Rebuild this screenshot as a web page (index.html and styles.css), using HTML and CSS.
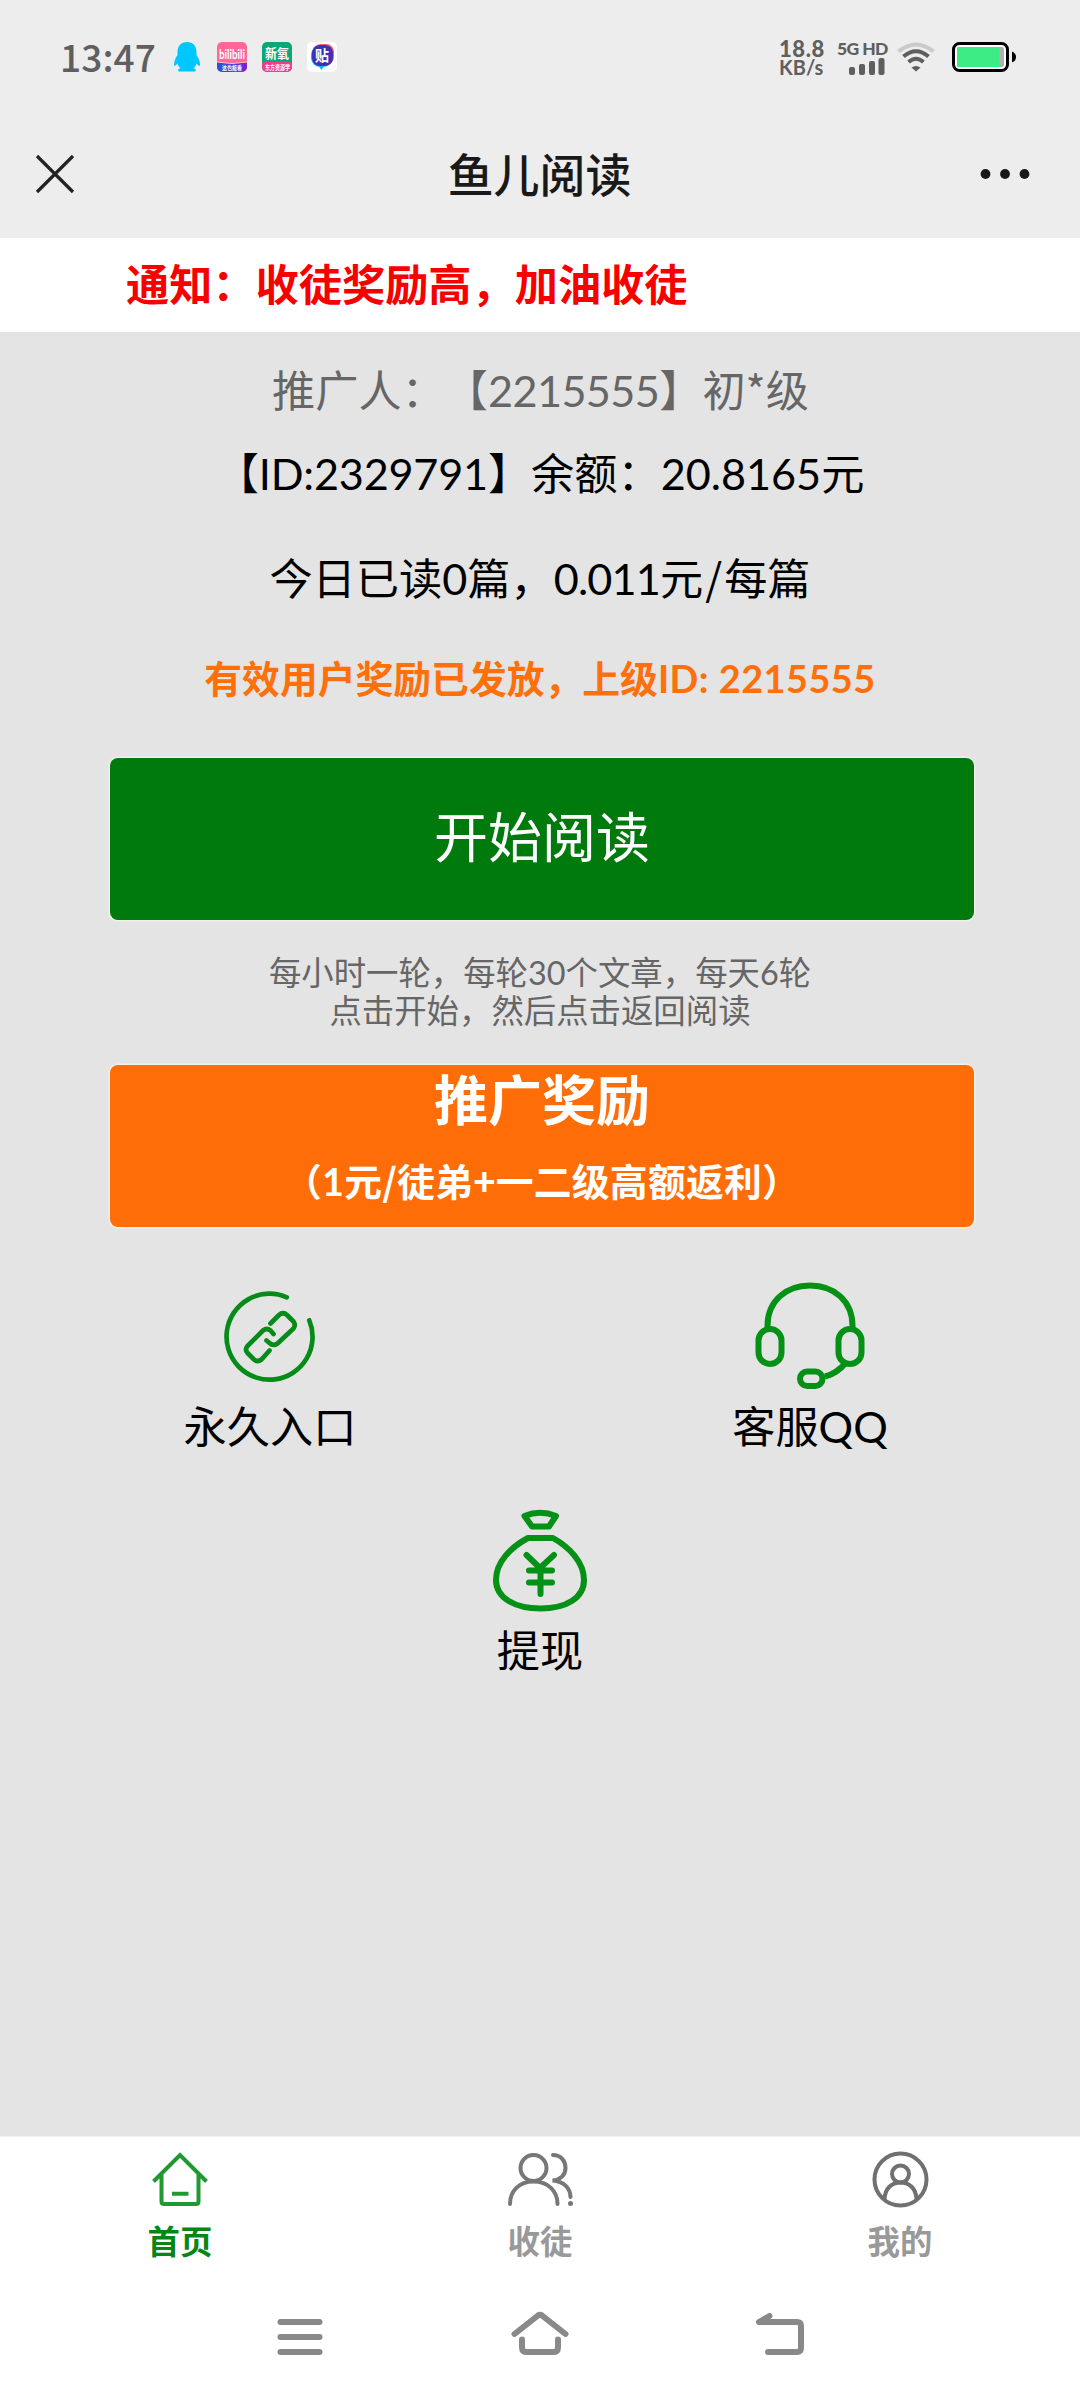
FILE: index.html
```html
<!DOCTYPE html>
<html lang="zh-CN">
<head>
<meta charset="utf-8">
<title>鱼儿阅读</title>
<link rel="stylesheet" href="styles.css">
</head>
<body>
<header class="top">
  <div class="status">
    <span class="clock">13:47</span>
    <div class="apps">
      <svg class="penguin" width="26" height="30" viewBox="0 0 26 30"><path fill="#00c8ff" d="M13 0C7 0 3.500 4 3.500 10L3.500 13C1.500 16 0 19 0 22.500C0 24.500 1 24.500 3.500 21.500C4 23.500 5 25 6.500 26C3.500 27 3.500 29.500 5.500 29.500L20.500 29.500C22.500 29.500 22.500 27 19.500 26C21 25 22 23.500 22.500 21.500C25 24.500 26 24.500 26 22.500C26 19 24.500 16 22.500 13L22.500 10C22.500 4 19 0 13 0Z"/></svg>
      <svg width="30" height="30" viewBox="0 0 30 30">
        <defs><linearGradient id="vio"><stop offset="0" stop-color="#2456d8"/><stop offset="1" stop-color="#7a20d8"/></linearGradient>
        <clipPath id="tile"><rect width="30" height="30" rx="5"/></clipPath></defs>
        <g clip-path="url(#tile)"><rect width="30" height="30" fill="#ff6699"/><path d="M0 20Q15 23 30 20V30H0Z" fill="url(#vio)"/><path d="M0 20Q15 23 30 20" fill="none" stroke="#ffc0b0"/></g>
        <text class="tiny latin" x="2" y="17" font-size="14" textLength="26" lengthAdjust="spacingAndGlyphs">bilibili</text>
        <text class="tiny" x="5" y="27.500" font-size="6" textLength="20" lengthAdjust="spacingAndGlyphs">这也能看</text>
      </svg>
      <svg width="30" height="30" viewBox="0 0 30 30">
        <g clip-path="url(#tile)"><rect width="30" height="30" fill="#08a878"/><rect y="19.500" width="30" height="11" rx="4" fill="#ed3d91"/></g>
        <text class="tiny" x="3" y="16" font-size="13" textLength="24" lengthAdjust="spacingAndGlyphs">新氧</text>
        <text class="tiny" x="3" y="27.500" font-size="6.500" textLength="25" lengthAdjust="spacingAndGlyphs">东方资源学</text>
      </svg>
      <svg width="30" height="30" viewBox="0 0 30 30">
        <rect width="30" height="30" rx="5" fill="#fff"/>
        <rect x="6" y="2" width="21" height="21" rx="8" fill="#ff5a78"/><rect x="4" y="4" width="21" height="21" rx="9" fill="#16b4f5"/><path d="M11.500 24H17.500L14.500 28Z" fill="#16b4f5"/><rect x="5" y="3" width="21" height="21" rx="8" fill="#4230b4"/>
        <text class="tiny" x="8" y="19" font-size="15" textLength="14" lengthAdjust="spacingAndGlyphs">贴</text>
      </svg>
    </div>
    <div class="speed"><b>18.8</b><span>KB/s</span></div>
    <div class="cell">
      <b>5G HD</b>
      <svg width="36" height="17" viewBox="0 0 36 17" fill="#5f5f5f"><rect y="9" width="6" height="8" rx="2"/><rect x="10" y="6" width="6" height="11" rx="2"/><rect x="20" y="3" width="6" height="14" rx="2"/><rect x="29.500" width="6" height="17" rx="2"/></svg>
    </div>
    <svg class="wifi" width="38" height="30" viewBox="0 0 38 30" fill="none" stroke-width="4"><path stroke="#cacaca" d="M1.500 9.500Q19-4.500 36.500 9.500"/><path stroke="#5f5f5f" d="M6.500 14.500Q19 4 31.500 14.500M11.500 20Q19 13.500 26.500 20"/><path fill="#5f5f5f" d="M14.500 25.500Q19 22.500 23.500 25.500L19 29.500Z"/></svg>
    <svg class="battery" width="65" height="30" viewBox="0 0 65 30"><rect x="1.500" y="1.500" width="54" height="27" rx="6" fill="#fff" stroke="#000" stroke-width="3"/><rect x="5" y="5" width="47" height="20" rx="2" fill="#b0b0b0"/><path fill="#3dec83" d="M7 5H47V25H7Q5 25 5 23V7Q5 5 7 5Z"/><path d="M60 9.500Q64 11 64 15T60 20.500Z"/></svg>
  </div>
  <div class="titlebar">
    <svg width="38" height="38" viewBox="0 0 38 38" fill="none" stroke="#222" stroke-width="3.200"><path d="M1 1L37 37M37 1L1 37"/></svg>
    <h1>鱼儿阅读</h1>
    <svg width="50" height="12" viewBox="0 0 50 12" fill="#181818"><circle cx="5.500" cy="6" r="4.900"/><circle cx="25" cy="6" r="4.900"/><circle cx="44.500" cy="6" r="4.900"/></svg>
  </div>
</header>
<div class="notice">通知：收徒奖励高，加油收徒</div>
<main>
  <p class="line promoter">推广人：【<span class="latin code">2215555</span>】初*级</p>
  <p class="line balance">【<span class="latin uid">ID:2329791</span>】余额：<span class="latin">20.8165</span>元</p>
  <p class="line today">今日已读<span class="latin">0</span>篇，<span class="latin rate">0.011</span>元<span class="slash">/</span>每篇</p>
  <p class="line reward">有效用户奖励已发放，上级<span class="latin refer">ID: 2215555</span></p>
  <button class="btn start">开始阅读</button>
  <p class="hint"><span>每小时一轮，每轮<i class="latin">30</i>个文章，每天<i class="latin">6</i>轮</span><span>点击开始，然后点击返回阅读</span></p>
  <button class="btn promo"><span class="promo-title">推广奖励</span><span class="promo-sub">（<span class="latin">1</span>元/徒弟+一二级高额返利）</span></button>
  <div class="links">
    <a class="link">
      <svg class="chain" width="120" height="120" viewBox="0 0 120 120" fill="none" stroke="#058b17" stroke-width="4.700" stroke-linecap="round" stroke-linejoin="round"><path d="M76.800 20.300A43 43 0 1 0 99.300 43.300M60.500 46.500L69 38Q73 34.500 77 38L83.500 44.500Q86 48 83.500 51.500L67.500 66.500Q63 69.500 59.500 66L56.500 63.500M63.500 57L60.500 53.500Q57 50.500 53 53.500L37.500 69Q34.500 72.500 37.500 76L44 82.500Q47.500 85.500 51.500 82.500L59.500 73.500"/></svg>
      <span class="label">永久入口</span>
    </a>
    <a class="link">
      <svg width="120" height="120" viewBox="0 0 120 120" fill="none" stroke="#059016" stroke-width="6"><path d="M17.500 52V49C17.500 24 36 8.500 60 8.500S102.500 24 102.500 49V52M95.500 86Q87 96.500 75 99.500"/><rect x="8.500" y="52" width="23" height="35" rx="11.500"/><rect x="88.500" y="52" width="23" height="35" rx="11.500"/><rect x="50" y="94.500" width="22.500" height="14.500" rx="7.200"/></svg>
      <span class="label">客服<span class="latin">QQ</span></span>
    </a>
    <a class="link wide">
      <svg width="120" height="120" viewBox="0 -4 120 120" fill="none" stroke="#059016" stroke-width="6" stroke-linecap="round" stroke-linejoin="round"><path d="M44.500 11Q60 4.500 76 11L69 21.500H52ZM48 33H73C89 42 104 57 104 75C104 93 86 103.500 60.500 103.500S16 93 16 75C16 57 31 42 48 33ZM46.500 50L60 63L74 50M49 65.500H72M49 77.500H72M60.500 63V89"/></svg>
      <span class="label">提现</span>
    </a>
  </div>
</main>
<nav class="tabs">
  <a class="tab active"><svg width="66" height="60" viewBox="0 0 66 60" fill="none" stroke="#209a30" stroke-width="4"><path d="M6.500 33.500L33 7L59.500 33.500M14.500 26V53.500Q14.500 56 17 56H49Q51.500 56 51.500 53.500V26M25 45.700H41.500"/></svg><span>首页</span></a>
  <a class="tab"><svg width="66" height="60" viewBox="0 0 66 60" fill="none" stroke="#777" stroke-width="4" stroke-linecap="round"><circle cx="26.500" cy="20" r="13"/><path d="M3 56C3 43 12 33.500 26.500 33.500S50.500 43 50.500 56M46 7C54 7 58.500 13 58.500 20S53.500 32 45.500 32.500C57 33 63.500 41 63.500 49"/><circle cx="63.500" cy="55.500" r="2.500" fill="#777" stroke="none"/></svg><span>收徒</span></a>
  <a class="tab"><svg width="66" height="60" viewBox="0 0 66 60" fill="none" stroke="#707070" stroke-width="4"><circle cx="33.500" cy="31.500" r="26"/><circle cx="33.500" cy="26" r="8.500"/><path d="M17.500 51C18 41 24 34.500 33.500 34.500S49 41 49.500 51"/></svg><span>我的</span></a>
</nav>
<footer class="sysnav">
  <svg width="60" height="50" viewBox="0 0 60 50"><path d="M10.500 10H49.500M10.500 25H49.500M10.500 40H49.500"/></svg>
  <svg width="60" height="50" viewBox="0 0 60 50"><path d="M4.500 22L28 3.500Q30 2 32 3.500L55.500 22M12 27.500V35Q12 40 16 40H44Q48 40 48 35V27.500"/></svg>
  <svg width="60" height="50" viewBox="0 0 60 50"><path d="M19.500 4L9 10H47Q51 10 51 14V36Q51 40 47 40H18"/></svg>
</footer>
</body>
</html>
```
FILE: styles.css
```css
* { box-sizing: border-box; margin: 0; padding: 0; }
body {
  width: 1080px; height: 2400px;
  display: flex; flex-direction: column;
  background: #e4e4e4; color: #000;
  font-family: "Noto Sans CJK SC", sans-serif;
  text-spacing-trim: space-all;
  font-variant-ligatures: none;
  overflow: hidden;
}
svg { display: block; flex: none; overflow: visible; }
.latin { font-family: Lato, "Noto Sans CJK SC", sans-serif; line-height: 1; font-style: normal; }
.top { height: 238px; background: #ededed; flex: none; }
.status { height: 114px; display: flex; align-items: center; padding: 0 60px 0 60px; color: #5f5f5f; }
.clock { width: 114px; font-size: 37px; font-weight: 500; line-height: 54px; padding-bottom: 2px; letter-spacing: .1px; }
.apps { display: flex; gap: 15px; }
.penguin { margin-right: 2px; }
.tiny { fill: #fff; font-weight: 700; }
.speed { margin-left: auto; width: 58px; display: flex; flex-direction: column; padding-top: 2px; font-family: Lato, sans-serif; font-size: 20px; line-height: 18px; font-weight: 700; }
.speed b { font-size: 22px; letter-spacing: .6px; }
.cell { width: 60px; display: flex; flex-direction: column; }
.cell b { font-family: Lato, sans-serif; font-size: 17.500px; line-height: 18px; font-weight: 900; white-space: nowrap; letter-spacing: -.6px; }
.cell svg { margin-left: 12px; }
.wifi { margin-right: 17px; }
.battery { margin-right: 3px; }
.titlebar { height: 120px; display: flex; align-items: center; justify-content: space-between; padding: 0 50px 0 36px; }
h1 { font-size: 45.900px; font-weight: 500; line-height: 60px; color: #191919; padding: 0 0 5px 25px; }
.notice { height: 94px; flex: none; background: #fff; color: #f80000; font-size: 43.200px; font-weight: 700; line-height: 89px; padding-left: 126px; }
main { flex: 1; display: flex; flex-direction: column; align-items: center; }
.line { font-size: 43.200px; line-height: 60px; height: 60px; white-space: nowrap; }
.promoter { color: #666; margin-top: 26px; padding-left: 1px; }
.code { letter-spacing: -.6px; }
.uid { letter-spacing: -.2px; }
.balance { margin-top: 23px; }
.today { margin-top: 45px; }
.rate { letter-spacing: -.8px; }
.slash { padding: 0 2px; }
.reward { margin-top: 41px; font-size: 37.800px; font-weight: 700; color: #ff6f0a; }
.refer { letter-spacing: .5px; }
.btn { width: 864px; height: 162px; margin-left: 4px; border: 0; border-radius: 8px; color: #fff; font-family: inherit; display: flex; flex-direction: column; align-items: center; flex: none; box-shadow: 0 0 0 1.500px #f1efe9; }
.start { margin-top: 51px; background: #007a0d; font-size: 54px; line-height: 154px; }
.hint { margin-top: 32px; display: flex; flex-direction: column; align-items: center; font-size: 32.400px; line-height: 38px; color: #666; }
.promo { margin-top: 37px; background: #ff6d09; font-weight: 700; }
.promo-title { font-size: 54px; line-height: 66px; }
.promo-sub { font-size: 37.800px; line-height: 50px; margin-top: 24px; letter-spacing: .25px; }
.links { width: 1080px; display: grid; grid-template-columns: 1fr 1fr; row-gap: 42px; margin-top: 50px; }
.link { display: flex; flex-direction: column; align-items: center; font-size: 43.200px; line-height: 60px; height: 182px; }
.label { margin-top: -3px; }
.wide { grid-column: span 2; }
.tabs { height: 143px; background: #fff; display: grid; grid-template-columns: repeat(3, 1fr); flex: none; border-top: 1px solid #efefef; }
.tab { display: flex; flex-direction: column; align-items: center; padding-top: 11px; color: #999; font-size: 32.400px; font-weight: 700; line-height: 40px; }
.tab svg { margin-bottom: 12px; }
.active { color: #078515; }
.sysnav { height: 121px; background: #fff; display: flex; justify-content: center; gap: 180px; padding-top: 33px; flex: none; }
.sysnav svg { fill: none; stroke: #898989; stroke-width: 6; stroke-linecap: round; stroke-linejoin: round; }
```
